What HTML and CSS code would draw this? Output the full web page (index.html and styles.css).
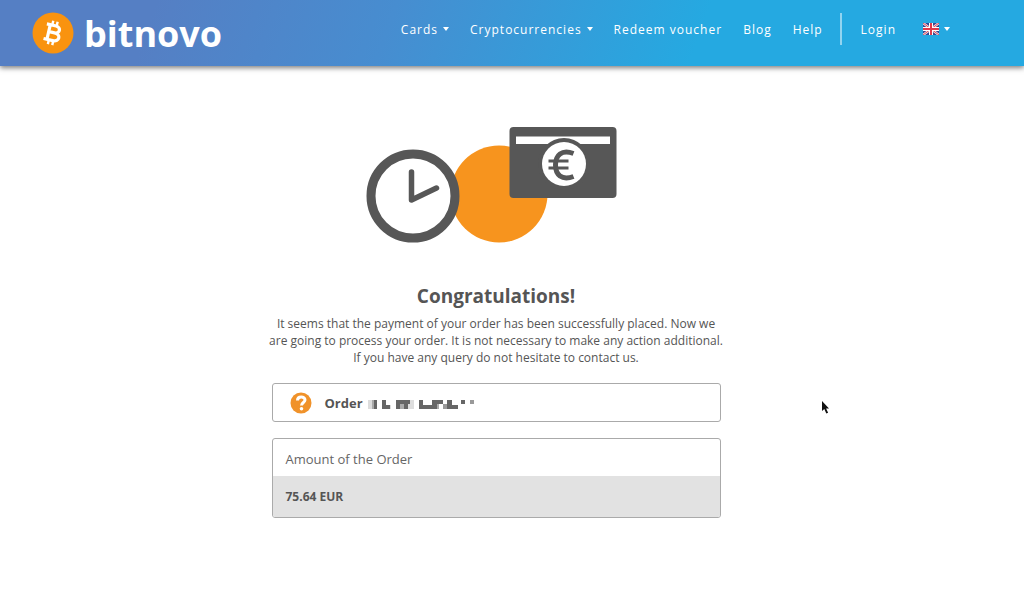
FILE: index.html
```html
<!DOCTYPE html>
<html lang="en">
  <head>
    <meta charset="utf-8">
    <meta name="viewport" content="width=device-width, initial-scale=1">
    <title>Bitnovo</title>
    <link rel="stylesheet" href="styles.css">
  </head>

  <body>
    <header class="topbar">
      <a class="brand" href="#">
        <svg class="brand-coin" viewBox="0 0 42 42" aria-hidden="true">
          <circle cx="21" cy="21" r="20.5" fill="#f9930f"/>
          <g transform="rotate(13 21 21)" fill="none" stroke="#fff">
            <path d="M13 13.500h9.500c5.500 0 5.500 7 0 7h-5.500M16.500 13v15.500M22.500 20.500c7 0 7 8 0 8h-9.500" stroke-width="3.200"/>
            <path d="M18.500 9v5M23 9v5M18.500 28v5M23 28v5" stroke-width="2.400"/>
          </g>
        </svg>
        <span>bitnovo</span>
      </a>
      <nav class="menu">
        <a href="#">Cards<i class="caret"></i></a>
        <a href="#">Cryptocurrencies<i class="caret"></i></a>
        <a href="#">Redeem voucher</a>
        <a href="#">Blog</a>
        <a href="#">Help</a>
        <a class="login" href="#">Login</a>
        <a href="#" aria-label="Language">
          <svg class="flag" viewBox="0 0 16 12" aria-hidden="true">
            <path fill="#35468f" d="M0 0h16v12H0z"/>
            <path d="M0 0l16 12M16 0L0 12" stroke="#f3dfe8" stroke-width="2.400"/>
            <path d="M0 0l16 12M16 0L0 12" stroke="#dd4a58" stroke-width="1"/>
            <path d="M8 0v12M0 6h16" stroke="#fff" stroke-width="4"/>
            <path d="M8 0v12M0 6h16" stroke="#e0394a" stroke-width="2"/>
          </svg><i class="caret"></i>
        </a>
      </nav>
    </header>

    <main class="order">
      <svg class="hero" viewBox="0 0 252 118" aria-hidden="true">
        <circle cx="133" cy="68" r="48.500" fill="#f7941e"/>
        <circle cx="47" cy="70" r="42" fill="#fff" stroke="#575757" stroke-width="9"/>
        <path d="M45.500 46v28l25-12" fill="none" stroke="#575757" stroke-width="5.500" stroke-linecap="round" stroke-linejoin="round"/>
        <rect x="143.500" y="1" width="107" height="71" rx="4" fill="#575757"/>
        <path d="M150 10.500h94v7.500h-94z" fill="#fff"/>
        <circle cx="198" cy="38" r="26" fill="#575757"/>
        <circle cx="198" cy="38" r="22" fill="#fff"/>
        <path d="M207.500 27.500c-12-4.500-18 2-18 11.500s6 16 18 11.500" fill="none" stroke="#575757" stroke-width="5"/>
        <path d="M182.500 35h20M182.500 42h20" stroke="#575757" stroke-width="3.200"/>
      </svg>

      <h1>Congratulations!</h1>
      <p class="message">
        It seems that the payment of your order has been successfully placed. Now we<br>
        are going to process your order. It is not necessary to make any action additional.<br>
        If you have any query do not hesitate to contact us.
      </p>

      <section class="box order-number">
        <svg class="help" viewBox="0 0 22 22" aria-hidden="true">
          <circle cx="11" cy="11" r="10.500" fill="#f0922a"/>
          <path d="M7.500 8.500c0-4.500 7.500-4.500 7.500-.500 0 2.500-3.500 2.500-3.500 5.500" fill="none" stroke="#fff" stroke-width="3"/>
          <circle cx="11.500" cy="16.700" r="1.800" fill="#fff"/>
        </svg>
        <strong>Order</strong>
        <svg class="masked" viewBox="0 0 108 12" aria-label="Hidden order number">
          <path fill="#ddd" d="M0 3h4v9H0zM17 8h6v4h-6zM40 3h6v9h-6zM84 8h6v4h-6z"/>
          <path fill="#aaa" d="M4 3h2v9H4zM32 7h4v5h-4zM66 7h5v5h-5z"/>
          <path fill="#666" d="M6 3h3v9H6zM14 3h4v9h-4zM18 8h4v4h-4zM28 3h14v4H28zM28 7h4v5h-4zM36 7h4v5h-4zM51 3h4v9h-4zM55 8h14v4H55zM64 3h5v5h-5zM69 3h6v4h-6zM79 3h5v9h-5zM84 8h6v4h-6zM93 3h4v4h-4z"/>
          <path fill="#999" d="M102 3h4v4h-4zM75 7h4v5h-4z"/>
        </svg>
      </section>

      <dl class="box amount">
        <dt>Amount of the Order</dt>
        <dd>75.64 EUR</dd>
      </dl>
    </main>

    <svg class="pointer" viewBox="0 0 9 14" aria-hidden="true">
      <path d="M1 1v10l2.300-2 2 4.500 1.800-.800-2-4.300H8z" fill="#111"/>
    </svg>
  </body>
</html>
```
FILE: styles.css
```css
* {
  box-sizing: border-box;
}
body {
  margin: 0;
  background: #fff;
  color: #555;
  font-family: "Open Sans", sans-serif;
  font-size: 12px;
}
a {
  color: inherit;
  text-decoration: none;
}
.topbar {
  display: flex;
  justify-content: space-between;
  height: 66px;
  padding: 0 74px 0 32px;
  background: linear-gradient(110deg, #557fc4 15%, #478dd0 38%, #25a9e1 68%);
  box-shadow: 0 2px 5px rgba(0, 0, 0, 0.5);
  color: #fff;
}
.brand {
  display: flex;
  align-items: center;
  gap: 10px;
  font-size: 36px;
  font-weight: 700;
}
.brand-coin {
  width: 42px;
  height: 42px;
}
.menu {
  display: flex;
  align-items: center;
  gap: 21px;
  height: 58px;
  letter-spacing: 1px;
}
.menu a {
  display: flex;
  align-items: center;
}
.menu .login {
  height: 32px;
  margin-left: -4px;
  padding: 0 6px 0 19px;
  border-left: 2px solid rgba(255, 255, 255, 0.5);
}
.caret {
  margin-left: 5px;
  border: 3px solid transparent;
  border-top: 4px solid #fff;
  border-bottom: 0;
}
.flag {
  width: 16px;
  height: 12px;
}
.order {
  width: 449px;
  max-width: 100%;
  margin: 60px auto 0;
  position: relative;
  right: 16px;
}
.hero {
  display: block;
  width: 252px;
  height: 118px;
  margin-left: 94px;
}
h1 {
  margin: 39px 0 6px;
  font-size: 19px;
  line-height: 26px;
  text-align: center;
}
.message {
  margin: 0 -20px;
  line-height: 17px;
  text-align: center;
}
.box {
  margin: 17px 0 0;
  border: 1px solid #aaa;
  border-radius: 3px;
  overflow: hidden;
}
.order-number {
  display: flex;
  align-items: center;
  height: 39px;
  padding-left: 17px;
  font-size: 13px;
}
.help {
  width: 22px;
  height: 22px;
  margin-right: 13px;
}
.masked {
  width: 108px;
  height: 12px;
  margin-left: 5px;
}
.amount {
  margin-top: 16px;
}
.amount dt {
  padding: 3px 13px 0;
  color: #666;
  font-size: 13px;
  line-height: 34px;
}
.amount dd {
  margin: 0;
  padding: 0 13px;
  background: #e2e2e2;
  font-weight: 700;
  line-height: 41px;
}
.pointer {
  position: absolute;
  top: 400px;
  left: 821px;
  width: 9px;
  height: 14px;
}
```
